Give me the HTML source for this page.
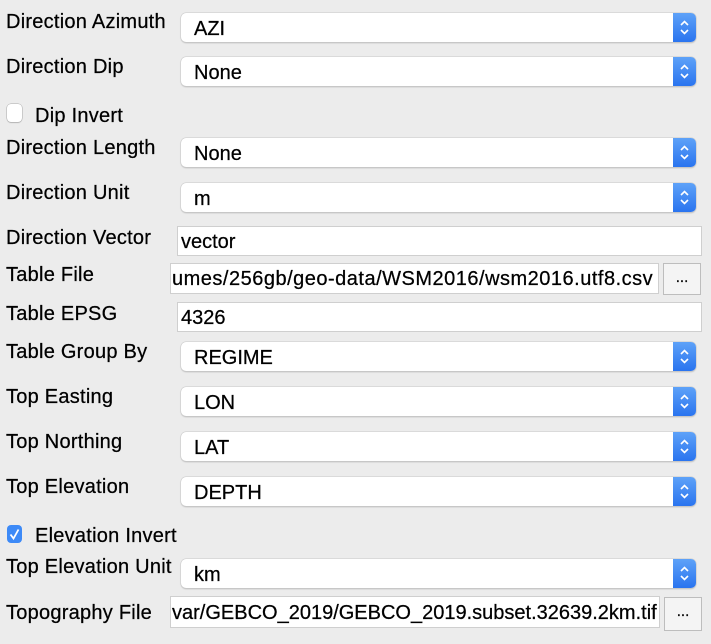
<!DOCTYPE html><html><head><style>
body{margin:0;width:711px;height:644px;background:#ececec;font-family:"Liberation Sans",Arial,sans-serif;position:relative;overflow:hidden;color:#000;-webkit-text-stroke:0.25px #000}
.l{position:absolute;left:6px;font-size:20px;line-height:20px;letter-spacing:0.25px}
.c{position:absolute;left:181px;width:515px;height:29px;background:#fff;border-radius:5px;box-shadow:0 0 0 .5px #c8c8c8,0 1px 1.5px rgba(0,0,0,.25);font-size:20px;line-height:32px;box-sizing:border-box;padding-left:13px}
.s{position:absolute;right:0;top:0;width:23px;height:29px;background:linear-gradient(#5ea2f8,#2a74ef);border-radius:0 5px 5px 0;-webkit-text-stroke:0}
.s svg{position:absolute;left:6px;top:6px}
.e{position:absolute;background:#fff;border:1px solid #cfcfcf;box-sizing:border-box;font-size:20px;line-height:30px;padding-left:3px;white-space:nowrap;overflow:hidden}
.b{position:absolute;width:38px;height:32px;background:#f4f4f4;border:1px solid #bdbdbd;box-sizing:border-box;text-align:center;font-size:15px;line-height:28px}
.cb{position:absolute;left:7px;width:15px;height:18px;border-radius:4px;background:#fff;box-shadow:0 0 0 .5px #aaa,0 1px 1px rgba(0,0,0,.2)}
</style></head><body>
<div class="l" style="top:12px">Direction Azimuth</div>
<div class="c" style="top:13px">AZI<div class="s"><svg width="11" height="17"><path d="M2 6L5.5 2.5 9 6M2 11l3.5 3.5L9 11" stroke="#fff" stroke-width="1.6" fill="none"/></svg></div></div>
<div class="l" style="top:57px">Direction Dip</div>
<div class="c" style="top:57px">None<div class="s"><svg width="11" height="17"><path d="M2 6L5.5 2.5 9 6M2 11l3.5 3.5L9 11" stroke="#fff" stroke-width="1.6" fill="none"/></svg></div></div>
<div class="cb" style="top:104px"></div><div class="l" style="left:35px;top:106px">Dip Invert</div>
<div class="l" style="top:138px">Direction Length</div>
<div class="c" style="top:138px">None<div class="s"><svg width="11" height="17"><path d="M2 6L5.5 2.5 9 6M2 11l3.5 3.5L9 11" stroke="#fff" stroke-width="1.6" fill="none"/></svg></div></div>
<div class="l" style="top:183px">Direction Unit</div>
<div class="c" style="top:183px">m<div class="s"><svg width="11" height="17"><path d="M2 6L5.5 2.5 9 6M2 11l3.5 3.5L9 11" stroke="#fff" stroke-width="1.6" fill="none"/></svg></div></div>
<div class="l" style="top:228px">Direction Vector</div>
<div class="e" style="left:177px;top:226px;width:525px;height:30px">vector</div>
<div class="l" style="top:265px">Table File</div>
<div class="e" style="left:170px;top:263px;width:489px;height:31px;padding-left:1px;letter-spacing:0.5px">umes/256gb/geo-data/WSM2016/wsm2016.utf8.csv</div>
<div class="b" style="left:663px;top:263px">...</div>
<div class="l" style="top:304px">Table EPSG</div>
<div class="e" style="left:177px;top:302px;width:525px;height:30px">4326</div>
<div class="l" style="top:342px">Table Group By</div>
<div class="c" style="top:342px">REGIME<div class="s"><svg width="11" height="17"><path d="M2 6L5.5 2.5 9 6M2 11l3.5 3.5L9 11" stroke="#fff" stroke-width="1.6" fill="none"/></svg></div></div>
<div class="l" style="top:387px">Top Easting</div>
<div class="c" style="top:387px">LON<div class="s"><svg width="11" height="17"><path d="M2 6L5.5 2.5 9 6M2 11l3.5 3.5L9 11" stroke="#fff" stroke-width="1.6" fill="none"/></svg></div></div>
<div class="l" style="top:432px">Top Northing</div>
<div class="c" style="top:432px">LAT<div class="s"><svg width="11" height="17"><path d="M2 6L5.5 2.5 9 6M2 11l3.5 3.5L9 11" stroke="#fff" stroke-width="1.6" fill="none"/></svg></div></div>
<div class="l" style="top:477px">Top Elevation</div>
<div class="c" style="top:477px">DEPTH<div class="s"><svg width="11" height="17"><path d="M2 6L5.5 2.5 9 6M2 11l3.5 3.5L9 11" stroke="#fff" stroke-width="1.6" fill="none"/></svg></div></div>
<div class="cb" style="top:525px;background:#3d8af7;box-shadow:none"><svg width="15" height="18"><path d="M3.5 9.5l3 4 5-9" stroke="#fff" stroke-width="1.8" fill="none"/></svg></div>
<div class="l" style="left:35px;top:526px">Elevation Invert</div>
<div class="l" style="top:557px">Top Elevation Unit</div>
<div class="c" style="top:559px">km<div class="s"><svg width="11" height="17"><path d="M2 6L5.5 2.5 9 6M2 11l3.5 3.5L9 11" stroke="#fff" stroke-width="1.6" fill="none"/></svg></div></div>
<div class="l" style="top:603px">Topography File</div>
<div class="e" style="left:170px;top:596px;width:490px;height:32px;line-height:32px;padding-left:1px">var/GEBCO_2019/GEBCO_2019.subset.32639.2km.tif</div>
<div class="b" style="left:664px;top:597px;height:34px">...</div>
</body></html>
